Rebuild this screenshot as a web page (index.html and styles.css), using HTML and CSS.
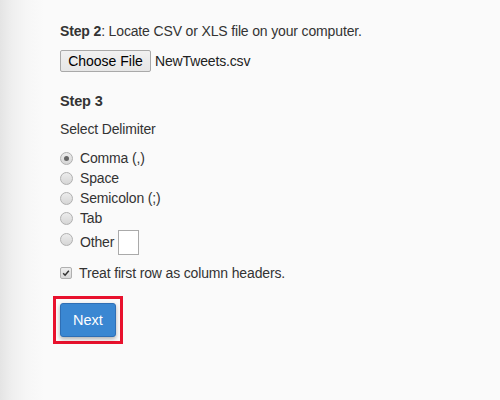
FILE: index.html
```html
<!DOCTYPE html>
<html>
<head>
<meta charset="utf-8">
<link rel="stylesheet" href="styles.css">
</head>
<body>
<div class="page">
  <p class="line step2"><b>Step 2</b>: Locate CSV or XLS file on your computer.</p>
  <div class="file-row">
    <button class="file-btn">Choose File</button>
    <span class="file-name">NewTweets.csv</span>
  </div>
  <p class="heading">Step 3</p>
  <p class="line label">Select Delimiter</p>
  <ul class="options">
    <li><span class="radio checked"></span>Comma (,)</li>
    <li><span class="radio"></span>Space</li>
    <li><span class="radio"></span>Semicolon (;)</li>
    <li><span class="radio"></span>Tab</li>
    <li class="other"><span class="radio"></span>Other <span class="other-box"></span></li>
  </ul>
  <div class="check-row"><span class="checkbox"><svg viewBox="0 0 12 12" width="12" height="12"><path d="M2.6 6.4 L4.9 8.7 L9.4 3.2" fill="none" stroke="#333" stroke-width="1.8"/></svg></span>Treat first row as column headers.</div>
  <div class="next-wrap">
    <button class="next-btn">Next</button>
  </div>
</div>
</body>
</html>
```
FILE: styles.css
```css
html, body {
  margin: 0;
  padding: 0;
}
body {
  width: 500px;
  height: 400px;
  overflow: hidden;
  background: linear-gradient(to right, #e4e4e4 0px, #efefef 12px, #f6f6f6 26px, #fafafa 44px, #fafafa 100%);
  font-family: "Liberation Sans", Arial, sans-serif;
  font-size: 14px;
  letter-spacing: -0.15px;
  color: #333;
}
.page {
  padding: 22px 0 0 60px;
}
p {
  margin: 0;
}
.line {
  line-height: 18px;
}
.step2 b {
  font-weight: bold;
}
.file-row {
  display: flex;
  align-items: center;
  margin-top: 10px;
  height: 22px;
}
.file-btn {
  font-family: "Liberation Sans", Arial, sans-serif;
  font-size: 14px;
  letter-spacing: 0;
  color: #000;
  height: 22px;
  width: 91px;
  padding: 0;
  border: 1px solid #a9a9a9;
  border-radius: 2px;
  background: linear-gradient(#f1f1f1, #e6e6e6);
}
.file-name {
  margin-left: 4px;
  color: #222;
}
.heading {
  margin-top: 20px;
  font-weight: bold;
  font-size: 14.5px;
  line-height: 18px;
}
.label {
  margin-top: 10px;
}
.options {
  list-style: none;
  margin: 10px 0 0 0;
  padding: 0;
}
.options li {
  display: flex;
  align-items: center;
  height: 20px;
}
.options li.other {
  height: 26px;
  margin-top: 1px;
}
.radio {
  width: 11px;
  height: 11px;
  border-radius: 50%;
  border: 1px solid #b0b0b0;
  background: linear-gradient(#ececec, #d6d6d6);
  margin-right: 7px;
  position: relative;
  flex: none;
}
.other .radio {
  align-self: flex-start;
  margin-top: 4px;
}
.radio.checked::after {
  content: "";
  position: absolute;
  left: 3px;
  top: 3px;
  width: 5px;
  height: 5px;
  border-radius: 50%;
  background: #666;
}
.other-box {
  display: inline-block;
  width: 19px;
  height: 23px;
  border: 1px solid #aaa;
  background: #fff;
  margin-left: 4px;
}
.check-row {
  display: flex;
  align-items: center;
  margin-top: 8px;
  height: 20px;
}
.checkbox {
  width: 12px;
  height: 12px;
  border: 1px solid #b0b0b0;
  border-radius: 2px;
  background: linear-gradient(#eee, #d8d8d8);
  margin-right: 7px;
  display: flex;
  box-sizing: border-box;
  align-items: center;
  justify-content: center;
  flex: none;
}
.checkbox svg {
  display: block;
}
.next-wrap {
  display: inline-block;
  margin: 13px 0 0 -7px;
  padding: 4px;
  border: 3px solid #e8112d;
}
.next-btn {
  display: block;
  width: 56px;
  height: 34px;
  padding: 0;
  border: 1px solid #2f6fb5;
  border-radius: 3px;
  background: #3a87d2;
  color: #fff;
  font-family: "Liberation Sans", Arial, sans-serif;
  font-size: 14.5px;
  letter-spacing: 0;
  box-shadow: 0 2px 4px rgba(0,0,0,0.3);
}
```
